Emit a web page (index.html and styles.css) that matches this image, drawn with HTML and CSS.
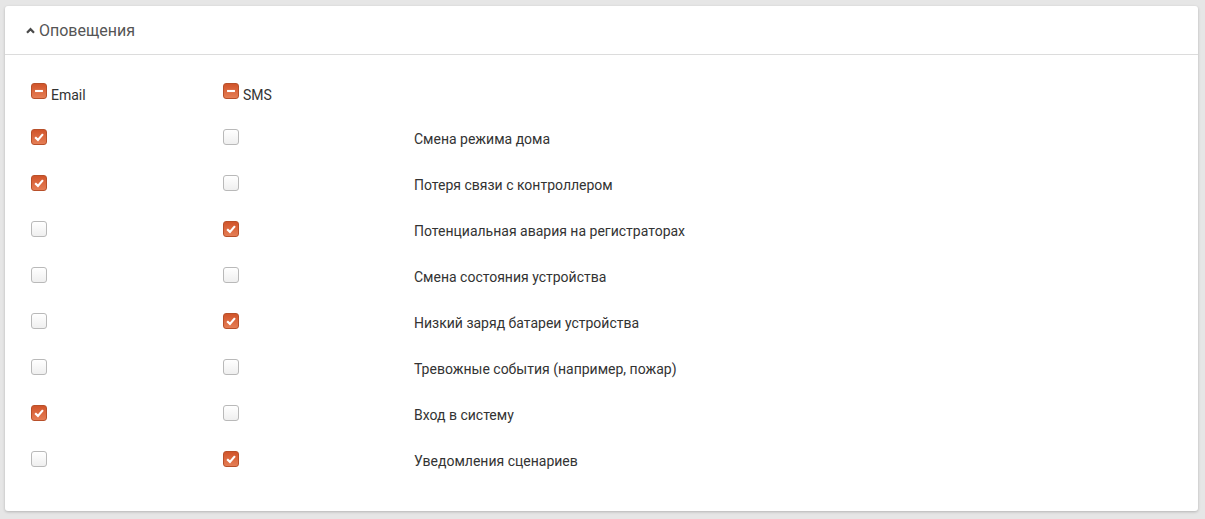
FILE: index.html
```html
<!DOCTYPE html>
<html lang="ru">
<head>
<meta charset="utf-8">
<title>Оповещения</title>
<link rel="stylesheet" href="styles.css">
</head>
<body>
<div class="card">
  <div class="card-header">
    <svg class="caret" width="9" height="7" viewBox="0 0 9 7"><path d="M1 5.8 L4.5 2.2 L8 5.8" fill="none" stroke="#4a4a4a" stroke-width="2.2" stroke-linejoin="miter"/></svg>
    <span class="title">Оповещения</span>
  </div>
  <div class="card-body">
    <div class="grid">
      <div class="cell head"><span class="cb on"><svg viewBox="0 0 16 16"><rect x="3.5" y="6.8" width="9" height="2.4" fill="#fff"/></svg></span><span class="hl">Email</span></div>
      <div class="cell head"><span class="cb on"><svg viewBox="0 0 16 16"><rect x="3.5" y="6.8" width="9" height="2.4" fill="#fff"/></svg></span><span class="hl">SMS</span></div>
      <div class="cell"></div>

      <div class="cell"><span class="cb on"><svg viewBox="0 0 16 16"><path d="M3.6 8.2 L6.8 11.3 L12.5 4.7" fill="none" stroke="#fff" stroke-width="2.5"/></svg></span></div>
      <div class="cell"><span class="cb"></span></div>
      <div class="cell lbl">Смена режима дома</div>

      <div class="cell"><span class="cb on"><svg viewBox="0 0 16 16"><path d="M3.6 8.2 L6.8 11.3 L12.5 4.7" fill="none" stroke="#fff" stroke-width="2.5"/></svg></span></div>
      <div class="cell"><span class="cb"></span></div>
      <div class="cell lbl">Потеря связи с контроллером</div>

      <div class="cell"><span class="cb"></span></div>
      <div class="cell"><span class="cb on"><svg viewBox="0 0 16 16"><path d="M3.6 8.2 L6.8 11.3 L12.5 4.7" fill="none" stroke="#fff" stroke-width="2.5"/></svg></span></div>
      <div class="cell lbl">Потенциальная авария на регистраторах</div>

      <div class="cell"><span class="cb"></span></div>
      <div class="cell"><span class="cb"></span></div>
      <div class="cell lbl">Смена состояния устройства</div>

      <div class="cell"><span class="cb"></span></div>
      <div class="cell"><span class="cb on"><svg viewBox="0 0 16 16"><path d="M3.6 8.2 L6.8 11.3 L12.5 4.7" fill="none" stroke="#fff" stroke-width="2.5"/></svg></span></div>
      <div class="cell lbl">Низкий заряд батареи устройства</div>

      <div class="cell"><span class="cb"></span></div>
      <div class="cell"><span class="cb"></span></div>
      <div class="cell lbl">Тревожные события (например, пожар)</div>

      <div class="cell"><span class="cb on"><svg viewBox="0 0 16 16"><path d="M3.6 8.2 L6.8 11.3 L12.5 4.7" fill="none" stroke="#fff" stroke-width="2.5"/></svg></span></div>
      <div class="cell"><span class="cb"></span></div>
      <div class="cell lbl">Вход в систему</div>

      <div class="cell"><span class="cb"></span></div>
      <div class="cell"><span class="cb on"><svg viewBox="0 0 16 16"><path d="M3.6 8.2 L6.8 11.3 L12.5 4.7" fill="none" stroke="#fff" stroke-width="2.5"/></svg></span></div>
      <div class="cell lbl">Уведомления сценариев</div>
    </div>
  </div>
</div>
</body>
</html>
```
FILE: styles.css
```css
html, body {
  margin: 0;
  padding: 0;
}
body {
  background: #e6e6e6;
  padding: 6px 7px 8px 5px;
  font-family: Roboto, "Liberation Sans", Arial, sans-serif;
  color: #333;
}
.card {
  background: #fff;
  border-radius: 3px;
  box-shadow: 0 1px 3px rgba(0,0,0,0.22);
  height: 505px;
  box-sizing: border-box;
}
.card-header {
  height: 49px;
  box-sizing: border-box;
  border-bottom: 1px solid #dcdcdc;
  display: flex;
  align-items: center;
  padding-left: 21px;
  gap: 4px;
}
.caret {
  display: block;
  margin-top: 1px;
}
.title {
  font-size: 16px;
  color: #555;
}
.card-body {
  padding: 13px 26px 0 26px;
}
.grid {
  display: grid;
  grid-template-columns: 192px 191px 1fr;
  grid-auto-rows: 46px;
}
.cell {
  display: flex;
  align-items: center;
}
.lbl {
  font-size: 14px;
  color: #333;
  padding-top: 3px;
}
.head .hl {
  font-size: 14px;
  color: #333;
  margin-left: 4px;
  padding-top: 7px;
}
.cb {
  width: 16px;
  height: 16px;
  box-sizing: border-box;
  border-radius: 3px;
  border: 1px solid #b9b9b9;
  background: linear-gradient(#ffffff, #efefef);
  display: block;
  flex: none;
}
.cb.on {
  border-color: #b8502a;
  background: linear-gradient(#d1542a, #e57e55);
}
.cb svg {
  display: block;
  width: 14px;
  height: 14px;
}
```
